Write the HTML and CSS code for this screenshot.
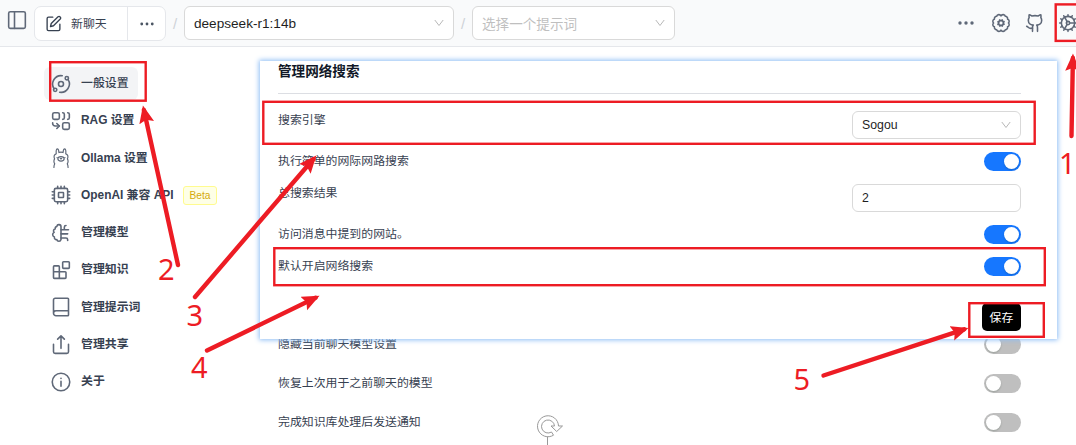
FILE: index.html
```html
<!DOCTYPE html>
<html lang="zh-CN">
<head>
  <meta charset="UTF-8" />
  <meta name="viewport" content="width=device-width, initial-scale=1" />
  <title>一般设置</title>
  <link rel="stylesheet" href="styles.css">
</head>
<body>
  <header class="topbar">
    <svg class="icon panel-icon" viewBox="0 0 24 24"><rect x="2" y="2" width="20" height="20" rx="2"/><path d="M9 2v20"/></svg>
    <div class="chat-group">
      <button class="new-chat">
        <svg class="icon" viewBox="0 0 24 24"><path d="M11 3H5a2 2 0 0 0-2 2v15a2 2 0 0 0 2 2h14a2 2 0 0 0 2-2v-7"/><path d="M18.4 2.6a2.2 2.2 0 0 1 3.1 3.1L12 15.2l-4.2 1 1-4.2z"/></svg>
        <span>新聊天</span>
      </button>
      <button class="more"><svg class="dots" viewBox="0 0 16 4"><circle cx="2" cy="2" r="1.6"/><circle cx="8" cy="2" r="1.6"/><circle cx="14" cy="2" r="1.6"/></svg></button>
    </div>
    <span class="slash">/</span>
    <div class="select model-select"><span>deepseek-r1:14b</span><svg class="chevron" viewBox="0 0 10 8"><path d="M.8 1 5 6.5 9.2 1"/></svg></div>
    <span class="slash">/</span>
    <div class="select prompt-select"><span>选择一个提示词</span><svg class="chevron" viewBox="0 0 10 8"><path d="M.8 1 5 6.5 9.2 1"/></svg></div>
    <nav class="actions">
      <svg class="dots large" viewBox="0 0 16 4"><circle cx="2" cy="2" r="1.7"/><circle cx="8" cy="2" r="1.7"/><circle cx="14" cy="2" r="1.7"/></svg>
      <svg class="icon" viewBox="0 0 24 24"><path d="M12 3.500a2.800 2.800 0 0 0-5.200.5 2.800 2.800 0 0 0-2.700 3.500 2.600 2.600 0 0 0-1 4.500 2.600 2.600 0 0 0 1 4.500A2.800 2.800 0 0 0 6.800 20a2.800 2.800 0 0 0 5.200.5 2.800 2.800 0 0 0 5.200-.5 2.800 2.800 0 0 0 2.700-3.500 2.600 2.600 0 0 0 1-4.500 2.600 2.600 0 0 0-1-4.500A2.800 2.800 0 0 0 17.200 4a2.800 2.800 0 0 0-5.200-.5"/><circle cx="12" cy="12" r="3"/><path d="m15.700 10.400-.9.4M9.200 13.200l-.9.4M13.600 15.700l-.4-.9M10.800 9.200l-.4-.9M15.700 13.500l-.9-.4M9.200 10.900l-.9-.4M10.500 15.700l.4-.9M13.100 9.200l.4-.9"/></svg>
      <svg class="icon" viewBox="0 0 24 24"><path d="M15 22v-4a4.8 4.8 0 0 0-1-3.5c3 0 6-2 6-5.5.08-1.25-.27-2.48-1-3.5.28-1.15.28-2.35 0-3.5 0 0-1 0-3 1.5-2.64-.5-5.36-.5-8 0C6 2 5 2 5 2c-.3 1.15-.3 2.35 0 3.5A5.4 5.4 0 0 0 4 9c0 3.5 3 5.5 6 5.5-.39.49-.68 1.05-.85 1.65-.17.6-.22 1.23-.15 1.85v4"/><path d="M9 18c-4.51 2-5-2-7-2"/></svg>
      <svg class="icon" viewBox="0 0 24 24"><circle cx="12" cy="12" r="8"/><circle cx="12" cy="12" r="2"/><path d="M12 2v2M12 22v-2M17 20.66l-1-1.73M11 10.27 7 3.34M20.66 17l-1.73-1M3.34 7l1.73 1M14 12h8M2 12h2M20.66 7l-1.73 1M3.34 17l1.73-1M17 3.34l-1 1.73M11 13.73l-4 6.93"/></svg>
    </nav>
  </header>

  <main class="layout">
    <aside class="sidebar">
      <a class="item active">
        <svg class="icon" viewBox="0 0 24 24"><circle cx="12" cy="12" r="3"/><circle cx="19" cy="5" r="2"/><circle cx="5" cy="19" r="2"/><path d="M10.4 21.9a10 10 0 0 0 9.94-15.42M13.5 2.1a10 10 0 0 0-9.84 15.42"/></svg>
        <span>一般设置</span>
      </a>
      <a class="item">
        <svg class="icon" viewBox="0 0 24 24"><rect x="2" y="2" width="8" height="8" rx="2"/><path d="M14 2a2 2 0 0 1 2 2v4a2 2 0 0 1-2 2M20 2a2 2 0 0 1 2 2v4a2 2 0 0 1-2 2M10 18H5a3 3 0 0 1-3-3v-1"/><path d="m7 21 3-3-3-3"/><rect x="14" y="14" width="8" height="8" rx="2"/></svg>
        <span>RAG 设置</span>
      </a>
      <a class="item">
        <svg class="icon thin" viewBox="0 0 24 24"><path d="M3.5 23.5c0-2 .2-3 1-4.5-1.2-2-1.4-4-.2-6-1.3-3-.3-5.5 2-6C6 3.5 6.3 1 7.5 1s1.900 2 2 4.500c1.500-.7 3.500-.7 5 0 .1-2.500.8-4.500 2-4.500S18 3.500 17.700 7c2.300.5 3.300 3 2 6 1.200 2 1 4-.2 6 .8 1.500 1 2.500 1 4.500"/><ellipse cx="12" cy="13" rx="3.800" ry="2.700"/><path d="M11.200 12.500l.8.6.8-.6M7.200 11.500h.2M16.600 11.500h.2"/></svg>
        <span>Ollama 设置</span>
      </a>
      <a class="item">
        <svg class="icon" viewBox="0 0 24 24"><rect x="4" y="4" width="16" height="16" rx="2"/><rect x="9" y="9" width="6" height="6" rx=".5"/><path d="M8 1.5V4M12 1.5V4M16 1.5V4M8 20v2.5M12 20v2.5M16 20v2.5M1.5 8H4M1.5 12H4M1.5 16H4M20 8h2.5M20 12h2.5M20 16h2.5"/></svg>
        <span>OpenAI 兼容 API</span>
        <em class="beta">Beta</em>
      </a>
      <a class="item">
        <svg class="icon" viewBox="0 0 24 24"><path d="M12 4.5a2.5 2.5 0 0 0-4.96-.46 2.5 2.5 0 0 0-1.98 3 2.5 2.5 0 0 0-1.32 4.24 3 3 0 0 0 .34 5.58 2.5 2.5 0 0 0 2.96 3.08 2.5 2.5 0 0 0 4.91.05L12 20z"/><path d="M12 8h9M16 8V5a2 2 0 0 1 2-2M12 13h8M12 18h6a2 2 0 0 1 2 2v1"/></svg>
        <span>管理模型</span>
      </a>
      <a class="item">
        <svg class="icon" viewBox="0 0 24 24"><rect x="14" y="2" width="8" height="8" rx="1"/><path d="M10 22V8a1 1 0 0 0-1-1H4a1 1 0 0 0-1 1v13a1 1 0 0 0 1 1h13a1 1 0 0 0 1-1v-6a1 1 0 0 0-1-1H3"/></svg>
        <span>管理知识</span>
      </a>
      <a class="item">
        <svg class="icon" viewBox="0 0 24 24"><path d="M3 19.5v-16A2 2 0 0 1 5 1.5h15a1 1 0 0 1 1 1v19a1 1 0 0 1-1 1H6a3 3 0 0 1 0-6h15"/></svg>
        <span>管理提示词</span>
      </a>
      <a class="item">
        <svg class="icon" viewBox="0 0 24 24"><path d="M3 11v9a2 2 0 0 0 2 2h14a2 2 0 0 0 2-2v-9M16 5l-4-4-4 4M12 1v15"/></svg>
        <span>管理共享</span>
      </a>
      <a class="item">
        <svg class="icon" viewBox="0 0 24 24"><circle cx="12" cy="12" r="10.5"/><path d="M12 11v6M12 7.5v.2"/></svg>
        <span>关于</span>
      </a>
    </aside>

    <section class="content">
      <div class="search-panel">
        <h2>管理网络搜索</h2>
        <div class="row tall first"><span>搜索引擎</span><div class="select engine"><span>Sogou</span><svg class="chevron" viewBox="0 0 10 8"><path d="M.8 1 5 6.5 9.2 1"/></svg></div></div>
        <div class="row"><span>执行简单的网际网路搜索</span><i class="switch on"></i></div>
        <div class="row tall"><span>总搜索结果</span><div class="select number"><span>2</span></div></div>
        <div class="row"><span>访问消息中提到的网站。</span><i class="switch on"></i></div>
        <div class="row"><span>默认开启网络搜索</span><i class="switch on"></i></div>
        <div class="footer"><button class="save">保存</button></div>
      </div>
      <div class="chat-settings">
        <div class="row"><span>隐藏当前聊天模型设置</span><i class="switch"></i></div>
        <div class="row"><span>恢复上次用于之前聊天的模型</span><i class="switch"></i></div>
        <div class="row"><span>完成知识库处理后发送通知</span><i class="switch"></i></div>
      </div>
    </section>
  </main>

  <!-- numbered steps drawn over the page -->
  <svg class="steps" viewBox="0 0 1076 445">
    <defs>
      <marker id="head" markerUnits="userSpaceOnUse" markerWidth="20" markerHeight="16" refX="13" refY="7.5" orient="auto">
        <path d="M0 0 17.5 7.5 0 15 3 7.5z" fill="#ed1c24"/>
      </marker>
    </defs>
    <g class="handle">
      <path d="M551 426h3.5a6.500 6.500 0 1 0-3 6l2 3.200a10.500 10.500 0 1 1 5-9.200h4l-5.800 5.500z"/>
      <path d="M547.5 437v8"/>
    </g>
    <g class="boxes">
      <rect x="1055.7" y="4.4" width="30" height="36.5"/>
      <rect x="50.2" y="62.2" width="95.5" height="38.5"/>
      <rect x="263.3" y="101.8" width="771.4" height="42"/>
      <rect x="274.3" y="248.2" width="770.5" height="37"/>
      <rect x="969.3" y="303.2" width="74.5" height="33.6"/>
    </g>
    <g class="arrows">
      <path d="M1071.5 136 1072.9 58"/>
      <path d="M178 265 143.9 110"/>
      <path d="M195 297 313.4 159"/>
      <path d="M207 350.5 315.5 297.8"/>
      <path d="M823.5 375.5 964.2 329.3"/>
    </g>
    <g class="numbers">
      <text x="1059" y="174">1</text>
      <text x="158" y="280">2</text>
      <text x="186.5" y="326">3</text>
      <text x="191" y="378">4</text>
      <text x="793.5" y="389.5">5</text>
    </g>
  </svg>
</body>
</html>
```
FILE: styles.css
```css
* {
  box-sizing: border-box;
}
body {
  margin: 0;
  position: relative;
  width: 1076px;
  height: 445px;
  overflow: hidden;
  background: #fff;
  color: #374151;
  font-family: "Liberation Sans", "Noto Sans CJK SC", sans-serif;
  font-size: 11.9px;
}
button {
  font: inherit;
  color: inherit;
  background: none;
  border: 0;
  padding: 0;
}
.icon {
  width: 20px;
  height: 20px;
  flex: none;
  fill: none;
  stroke: #5f6878;
  stroke-width: 1.9;
  stroke-linecap: round;
  stroke-linejoin: round;
}
.icon.thin {
  stroke-width: 1.4;
}

/* top bar */
.topbar {
  display: flex;
  align-items: center;
  height: 47px;
  padding-left: 7px;
  background: #f9fafb;
  border-bottom: 1px solid #e5e7eb;
}
.topbar > * {
  flex: none;
}
.panel-icon {
  margin: -6px 7px 0 0;
}
.chat-group {
  display: flex;
  width: 132px;
  height: 35px;
  background: #fff;
  border: 1px solid #e5e7eb;
  border-radius: 7px;
}
.new-chat {
  display: flex;
  align-items: center;
  gap: 9px;
  width: 93px;
  padding-left: 10px;
  border-right: 1px solid #e5e7eb;
}
.new-chat .icon {
  width: 17px;
  height: 17px;
  stroke: #374151;
}
.new-chat span {
  margin-top: -2px;
}
.more {
  flex: 1;
}
.dots {
  width: 14px;
  height: 4px;
  fill: #4b5563;
  vertical-align: middle;
}
.slash {
  width: 18px;
  text-align: center;
  font-size: 15px;
  color: #cfd2d8;
}
.select {
  display: flex;
  align-items: center;
  justify-content: space-between;
  background: #fff;
  border: 1px solid #d9d9d9;
  border-radius: 6px;
  color: #1f1f1f;
}
.chevron {
  width: 10px;
  height: 8px;
  fill: none;
  stroke: #b8b8b8;
  stroke-width: 1;
}
.model-select {
  width: 270px;
  height: 34px;
  padding: 0 9px;
  font-size: 13.6px;
}
.prompt-select {
  width: 203px;
  height: 34px;
  padding: 0 9px;
  font-size: 13.6px;
  color: #bfbfbf;
}
.actions {
  display: flex;
  align-items: center;
  margin-left: 283px;
}
.actions .icon {
  margin-right: 13.5px;
}
.dots.large {
  flex: none;
  width: 16px;
  margin-right: 17px;
  fill: #5f6878;
}

/* settings */
.layout {
  display: grid;
  grid-template-columns: 216px 797px;
  padding-left: 44px;
}
.sidebar {
  padding-top: 20px;
}
.item {
  display: flex;
  align-items: center;
  width: 94px;
  height: 33px;
  margin-bottom: 4.3px;
  padding-left: 7px;
  gap: 10px;
  border-radius: 6px;
  font-weight: 600;
  white-space: nowrap;
}
.item span {
  margin-top: -4px;
}
.item.active {
  background: #f3f4f6;
}
.item.active span {
  font-weight: 500;
}
.beta {
  padding: 0 6px;
  margin-left: -1px;
  font-size: 10.2px;
  font-style: normal;
  font-weight: 400;
  line-height: 17px;
  color: #d4a90c;
  background: #feffe6;
  border: 1px solid #fffb8f;
  border-radius: 3px;
}
.search-panel {
  position: relative;
  z-index: 1;
  height: 278px;
  margin-top: 14px;
  padding: 0 36px 0 18px;
  background: #fff;
  box-shadow: 0 0 5px 1px #8dbdf5;
}
h2 {
  height: 33px;
  margin: 0;
  border-bottom: 1px solid #dcdee3;
  color: #111827;
  font-size: 13.6px;
  font-weight: 600;
  line-height: 21px;
}
.row {
  display: flex;
  justify-content: space-between;
  height: 19px;
  margin-top: 13px;
  line-height: 18px;
}
.row.tall {
  height: 28px;
}
.row.first {
  margin-top: 17px;
}
.engine,
.number {
  width: 169px;
  height: 28px;
  padding: 0 9px;
  font-size: 12.3px;
}
.switch {
  width: 37px;
  height: 19px;
  padding: 2px;
  border-radius: 10px;
  background: #bfbfbf;
}
.switch::before {
  content: "";
  display: block;
  width: 15px;
  height: 15px;
  border-radius: 50%;
  background: #fff;
  box-shadow: 0 1px 2px rgba(0, 35, 11, 0.2);
}
.switch.on {
  background: #1677ff;
}
.switch.on::before {
  margin-left: auto;
}
.footer {
  display: flex;
  justify-content: flex-end;
  margin-top: 27px;
}
.save {
  width: 39px;
  height: 28px;
  padding-bottom: 2px;
  border-radius: 5px;
  background: #000;
  color: #fff;
}
.chat-settings {
  margin-top: -4px;
  padding: 0 36px 0 18px;
}
.chat-settings .row {
  margin: 0 0 20px;
}

/* step marks */
.steps {
  position: absolute;
  inset: 0;
  z-index: 2;
  width: 1076px;
  height: 445px;
}
.boxes {
  fill: none;
  stroke: #ed1c24;
  stroke-width: 2.4;
}
.arrows {
  fill: none;
  stroke: #ed1c24;
  stroke-width: 4.4;
  stroke-linecap: round;
}
.arrows path {
  marker-end: url(#head);
}
.numbers {
  fill: #ed1c24;
  font-family: "Noto Sans", sans-serif;
  font-size: 29px;
}
.handle {
  fill: #fff;
  stroke: #999;
  stroke-width: 1;
}
```
